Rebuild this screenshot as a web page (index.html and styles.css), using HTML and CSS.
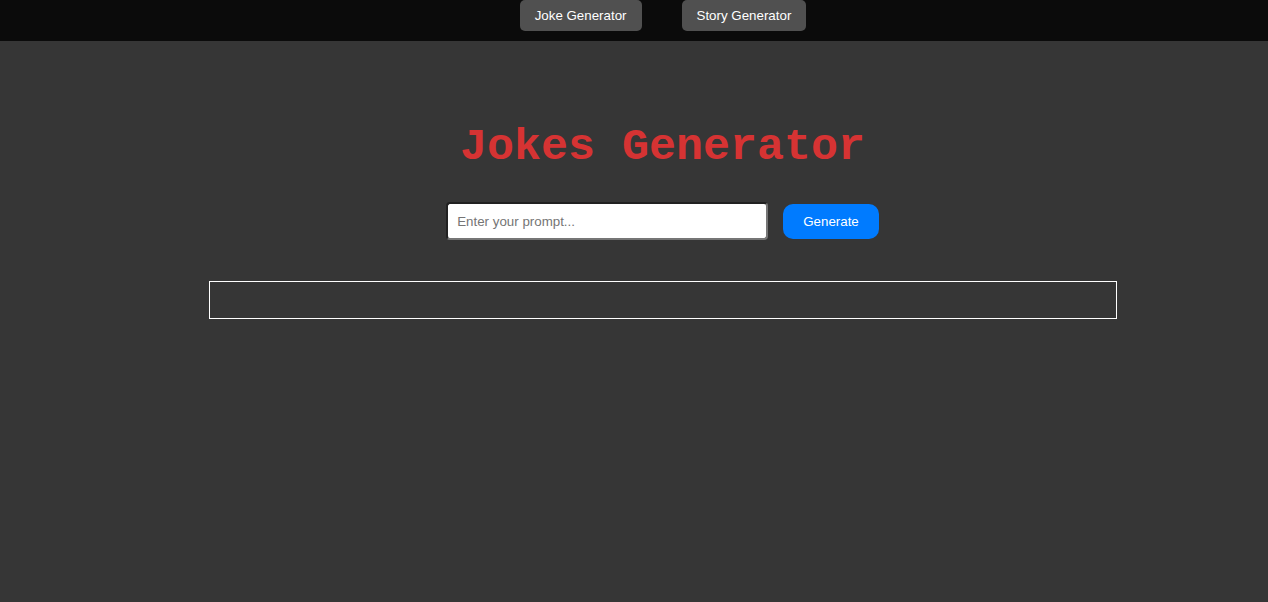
FILE: index.html
```html
<!DOCTYPE html>
<html>
<head>
<meta charset="utf-8">
<title>Jokes Generator</title>
<link rel="stylesheet" href="styles.css">
</head>
<body>
<nav class="navbar">
  <button class="nav-btn">Joke Generator</button>
  <button class="nav-btn">Story Generator</button>
</nav>
<main class="main">
  <h1 class="title">Jokes Generator</h1>
  <div class="prompt-row">
    <input class="prompt-input" type="text" placeholder="Enter your prompt...">
    <button class="generate-btn">Generate</button>
  </div>
  <div class="output"></div>
</main>
</body>
</html>
```

FILE: styles.css
```css
html, body {
  margin: 0;
  padding: 0;
  height: 100%;
}
body {
  background: #363636;
  font-family: "Liberation Sans", Arial, sans-serif;
  overflow: hidden;
}
.navbar {
  height: 41px;
  background: #0b0b0b;
  display: flex;
  justify-content: center;
  align-items: flex-start;
  gap: 40px;
  padding-left: 58px;
  box-sizing: border-box;
}
.nav-btn {
  height: 31px;
  padding: 0 15px;
  background: #505050;
  color: #ffffff;
  border: none;
  border-radius: 5px;
  font-family: "Liberation Sans", Arial, sans-serif;
  font-size: 13.333px;
}
.main {
  padding-left: 57px;
  display: flex;
  flex-direction: column;
  align-items: center;
}
.title {
  margin: 81px 0 0;
  font-family: "Liberation Mono", "Courier New", monospace;
  font-size: 45px;
  font-weight: bold;
  color: #d63333;
  line-height: 51px;
}
.prompt-row {
  margin-top: 29px;
  display: flex;
  align-items: center;
  gap: 15px;
}
.prompt-input {
  width: 322px;
  height: 38px;
  box-sizing: border-box;
  padding: 0 9px;
  border: 2px inset #767676;
  border-radius: 4px;
  background: #ffffff;
  font-family: "Liberation Sans", Arial, sans-serif;
  font-size: 13.333px;
  color: #222;
}
.prompt-input::placeholder {
  color: #757575;
}
.generate-btn {
  height: 35px;
  padding: 0 20px;
  background: #007bff;
  color: #ffffff;
  border: none;
  border-radius: 10px;
  font-family: "Liberation Sans", Arial, sans-serif;
  font-size: 13.333px;
}
.output {
  margin-top: 41px;
  width: 908px;
  height: 38px;
  box-sizing: border-box;
  border: 1px solid #ffffff;
}
```
